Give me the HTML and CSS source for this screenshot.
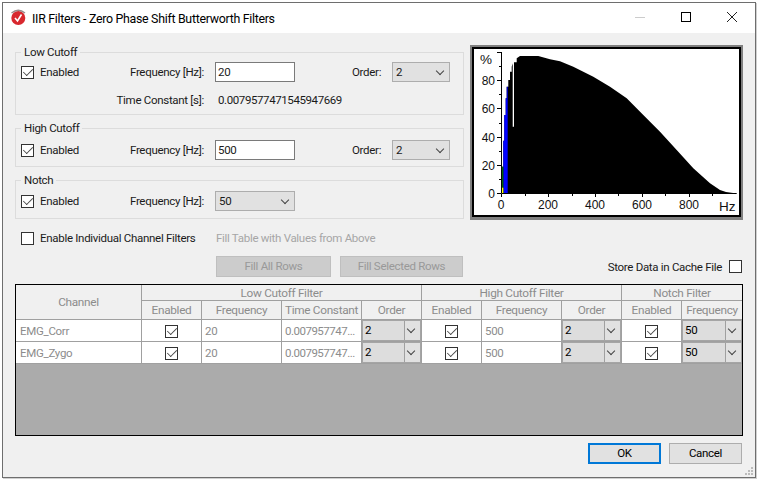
FILE: index.html
```html
<!DOCTYPE html>
<html lang="en">
<head>
    <meta charset="UTF-8">
    <title>IIR Filters</title>
    <link rel="stylesheet" href="styles.css">
</head>
<body>
<div class="window">
    <div class="titlebar">
        <svg class="app-icon" width="18" height="18" viewBox="0 0 18 18">
            <circle cx="8.300" cy="9" r="7" fill="#d8282e"/>
            <path d="M1.500 4Q8.300 -1.500 15 4" fill="none" stroke="#9a8a8a" stroke-width="1.400"/>
            <path d="M5 9l2.500 3 4-6.500" fill="none" stroke="#fff" stroke-width="1.600"/>
        </svg>
        <span class="title">IIR Filters - Zero Phase Shift Butterworth Filters</span>
        <div class="win-btns">
            <svg width="16" height="16" viewBox="0 0 16 16"><path d="M3 8.500h10" stroke="#ccc"/></svg>
            <svg width="16" height="16" viewBox="0 0 16 16"><rect x="3.500" y="3.500" width="9" height="9" fill="none" stroke="#000"/></svg>
            <svg width="16" height="16" viewBox="0 0 16 16"><path d="M3 3l10 10M13 3L3 13" stroke="#222"/></svg>
        </div>
    </div>

    <div class="content">
        <div class="top">
            <div class="groups">
                <fieldset class="group group-low">
                    <legend>Low Cutoff</legend>
                    <div class="row">
                        <label class="check"><span class="box on"></span>Enabled</label>
                        <span class="lbl">Frequency [Hz]:</span>
                        <span class="input">20</span>
                        <span class="lbl-order">Order:</span>
                        <span class="combo small">2</span>
                    </div>
                    <div class="row-tc">
                        <span class="lbl">Time Constant [s]:</span>
                        <span class="num">0.0079577471545947669</span>
                    </div>
                </fieldset>
                <fieldset class="group group-high">
                    <legend>High Cutoff</legend>
                    <div class="row">
                        <label class="check"><span class="box on"></span>Enabled</label>
                        <span class="lbl">Frequency [Hz]:</span>
                        <span class="input">500</span>
                        <span class="lbl-order">Order:</span>
                        <span class="combo small">2</span>
                    </div>
                </fieldset>
                <fieldset class="group group-notch">
                    <legend>Notch</legend>
                    <div class="row">
                        <label class="check"><span class="box on"></span>Enabled</label>
                        <span class="lbl">Frequency [Hz]:</span>
                        <span class="combo wide">50</span>
                    </div>
                </fieldset>
            </div>

            <div class="chart">
                <svg width="265" height="166" viewBox="0 0 265 166">
                    <path fill="#000" d="M27.700 144.500V117.700H29.300V91.700H30.300V66H31.700V49.300H32.700V37.700H34.300V31H36V22.700H37.700V17.700L38.700 14.300V77.700H40V13.300H42.700V9.300L46 7H64.300L76 10.300 86 12.300 99.300 17.700 119.300 27.700 136 37.700 152.700 49.300 169.300 66 186 82.700 202.700 101 219.300 119.300 236 134.300 246 141 252 143 262.700 144.500Z"/>
                    <path fill="#00f" d="M29.300 144.500V91.700H30.300V66H31.700V49.300H32.700V37.700H33.700V144.500Z"/>
                    <rect x="28" y="117.700" width="1.300" height="26.800" fill="#060"/>
                    <rect x="28" y="138.700" width="1.300" height="5.800" fill="#ff0"/>
                    <path d="M27.500 3V144.500H262.700" fill="none" stroke="#000"/>
                    <path stroke="#000" d="M23 3.500h4M25 17.500h2M23 31.500h4M25 45.500h2M23 59.500h4M25 74.500h2M23 88.500h4M25 102.500h2M23 116.500h4M25 130.500h2M23 144.500h4M27.500 145v3M51.500 145v2M74.500 145v3M98.500 145v2M121.500 145v3M144.500 145v2M168.500 145v3M191.500 145v2M215.500 145v3M238.500 145v2"/>
                    <g class="axis" text-anchor="end">
                        <text x="21" y="36">80</text>
                        <text x="21" y="64">60</text>
                        <text x="21" y="93">40</text>
                        <text x="21" y="121">20</text>
                        <text x="21" y="149">0</text>
                    </g>
                    <g class="axis" text-anchor="middle">
                        <text x="27" y="160">0</text>
                        <text x="74" y="160">200</text>
                        <text x="121" y="160">400</text>
                        <text x="168" y="160">600</text>
                        <text x="215" y="160">800</text>
                    </g>
                    <text class="unit" x="6" y="15">%</text>
                    <text class="unit" x="245" y="162">Hz</text>
                </svg>
            </div>
        </div>

        <div class="controls">
            <label class="check"><span class="box"></span>Enable Individual Channel Filters</label>
            <span class="hint">Fill Table with Values from Above</span>
        </div>
        <div class="actions">
            <span class="btn off first">Fill All Rows</span>
            <span class="btn off">Fill Selected Rows</span>
            <label class="store">Store Data in Cache File<span class="box"></span></label>
        </div>

        <div class="grid-wrap">
            <table class="grid">
                <colgroup>
                    <col class="c-ch"><col class="c-en"><col class="c-fr"><col class="c-fr"><col class="c-en">
                    <col class="c-en"><col class="c-fr"><col class="c-en"><col class="c-en"><col class="c-en">
                </colgroup>
                <thead>
                    <tr class="h1">
                        <th rowspan="2">Channel</th>
                        <th colspan="4">Low Cutoff Filter</th>
                        <th colspan="3">High Cutoff Filter</th>
                        <th colspan="2">Notch Filter</th>
                    </tr>
                    <tr class="h2">
                        <th>Enabled</th><th>Frequency</th><th>Time Constant</th><th>Order</th>
                        <th>Enabled</th><th>Frequency</th><th>Order</th>
                        <th>Enabled</th><th>Frequency</th>
                    </tr>
                </thead>
                <tbody>
                    <tr>
                        <td class="name">EMG_Corr</td>
                        <td class="mid"><span class="box on"></span></td>
                        <td>20</td><td class="tc">0.007957747...</td>
                        <td class="sel"><span class="cell-combo">2</span></td>
                        <td class="mid"><span class="box on"></span></td>
                        <td>500</td>
                        <td class="sel"><span class="cell-combo">2</span></td>
                        <td class="mid"><span class="box on"></span></td>
                        <td class="sel"><span class="cell-combo">50</span></td>
                    </tr>
                    <tr>
                        <td class="name">EMG_Zygo</td>
                        <td class="mid"><span class="box on"></span></td>
                        <td>20</td><td class="tc">0.007957747...</td>
                        <td class="sel"><span class="cell-combo">2</span></td>
                        <td class="mid"><span class="box on"></span></td>
                        <td>500</td>
                        <td class="sel"><span class="cell-combo">2</span></td>
                        <td class="mid"><span class="box on"></span></td>
                        <td class="sel"><span class="cell-combo">50</span></td>
                    </tr>
                </tbody>
            </table>
        </div>

        <div class="footer">
            <span class="btn ok">OK</span>
            <span class="btn">Cancel</span>
        </div>
    </div>

    <svg class="grip" width="8" height="8" viewBox="0 0 8 8">
        <path fill="#bbb" d="M6 0h2v2H6zM3 3h2v2H3zM6 3h2v2H6zM0 6h2v2H0zM3 6h2v2H3zM6 6h2v2H6z"/>
    </svg>
</div>
</body>
</html>
```

FILE: styles.css
```css
* {
    box-sizing: border-box;
}
body {
    margin: 0;
    padding: 2px 4px 2px 2px;
    background-color: #fff;
    font-family: Roboto, "Liberation Sans", Arial, sans-serif;
    font-size: 11.5px;
    letter-spacing: -0.3px;
    color: #1a1a1a;
}
.window {
    height: 476px;
    border: 1px solid #6e6e6e;
    box-shadow: 1px 1px 0 #d0d0d0;
    background-color: #f0f0f0;
    display: flex;
    flex-direction: column;
    position: relative;
}
.titlebar {
    height: 30px;
    flex: none;
    background-color: #fff;
    display: flex;
    align-items: center;
    padding-left: 7px;
    color: #000;
    font-size: 12.400px;
}
.app-icon {
    margin-right: 4px;
}
.win-btns {
    margin-left: auto;
    display: flex;
    gap: 30px;
    padding-right: 15px;
    padding-bottom: 2px;
}
.content {
    flex: 1;
    padding: 12px 12px 0 12px;
}
.top {
    display: flex;
    justify-content: space-between;
}
.groups {
    width: 449px;
}
.group {
    margin: 0 0 6px;
    padding: 0 0 0 5px;
    height: 46px;
    border: 1px solid #dcdcdc;
    min-width: 0;
}
.group-low {
    height: 70px;
}
.group-low .row {
    margin-top: 2px;
}
.group-high .row {
    margin-top: 4px;
}
.group-notch {
    margin-bottom: 0;
}
.group-notch .row {
    margin-top: 3px;
}
legend {
    padding: 0 3px;
    margin-left: 0;
    height: 14px;
    line-height: 14px;
}
.row {
    display: flex;
    align-items: center;
    height: 22px;
}
.row-tc {
    display: flex;
    align-items: center;
    height: 18px;
    margin-top: 8px;
}
.check {
    display: flex;
    align-items: center;
    gap: 6px;
    width: 100px;
    white-space: nowrap;
}
.box {
    display: inline-block;
    flex: none;
    width: 13px;
    height: 13px;
    border: 1px solid #333;
    background-color: #fff;
    position: relative;
}
.box.on::after {
    content: "";
    position: absolute;
    left: 1px;
    top: 1px;
    width: 9px;
    height: 5px;
    border-left: 1px solid #444;
    border-bottom: 1px solid #444;
    transform: rotate(-45deg) scale(0.9);
}
.lbl {
    width: 83px;
    text-align: right;
    white-space: nowrap;
}
.row-tc .lbl {
    width: 183px;
    margin-right: 14px;
}
.num {
    letter-spacing: -0.4px;
}
.input {
    margin-left: 11px;
    width: 80px;
    height: 20px;
    line-height: 16px;
    padding: 1px 2px;
    background-color: #fff;
    border: 1px solid #7a7a7a;
}
.lbl-order {
    margin-left: 57px;
    width: 40px;
}
.combo {
    display: block;
    height: 20px;
    line-height: 18px;
    padding-left: 3px;
    border: 1px solid #adadad;
    background-color: #e1e1e1;
    position: relative;
}
.combo::after,
.cell-combo::after {
    content: "";
    position: absolute;
    width: 5px;
    height: 5px;
    border-right: 1px solid #444;
    border-bottom: 1px solid #444;
    transform: rotate(45deg);
    right: 6px;
    top: 5px;
}
.small {
    width: 58px;
}
.wide {
    width: 80px;
    margin-left: 11px;
}
.chart {
    width: 273px;
    height: 175px;
    border: 2px solid #808080;
    border-bottom-width: 3px;
    background-color: #fff;
}
.chart svg {
    display: block;
    box-sizing: content-box;
    border: 2px solid #000;
}
.axis text {
    font-family: "Liberation Sans", Arial, sans-serif;
    font-size: 12px;
    letter-spacing: 0;
    fill: #111;
}
.unit {
    font-family: "Liberation Sans", Arial, sans-serif;
    font-size: 13.500px;
    letter-spacing: 0;
    fill: #111;
}
.controls {
    display: flex;
    align-items: center;
    height: 16px;
    margin-top: 10px;
    padding-left: 6px;
}
.controls .check {
    width: 195px;
}
.hint {
    color: #a6a6a6;
}
.actions {
    display: flex;
    align-items: center;
    margin-top: 10px;
    padding-left: 201px;
}
.btn {
    display: block;
    width: 123px;
    height: 21px;
    line-height: 19px;
    text-align: center;
    border: 1px solid #adadad;
    background-color: #e1e1e1;
}
.btn.off {
    background-color: #ccc;
    border-color: #bfbfbf;
    color: #999;
}
.btn.first {
    width: 115px;
    margin-right: 9px;
}
.store {
    margin-left: auto;
    margin-right: 1px;
    display: flex;
    align-items: center;
    gap: 7px;
}
.grid-wrap {
    height: 152px;
    margin-top: 7px;
    border: 1px solid #000;
    background-color: #ababab;
}
.grid {
    table-layout: fixed;
    width: 726px;
    border-collapse: separate;
    border-spacing: 0;
}
.c-ch { width: 126px; }
.c-en { width: 60px; }
.c-fr { width: 80px; }
.grid th {
    font-weight: normal;
    font-size: 11.800px;
    color: #8c8c8c;
    background-color: #f0f0f0;
    border-right: 1px solid #a0a0a0;
    border-bottom: 1px solid #a0a0a0;
    padding: 0;
    white-space: nowrap;
}
.h1 th {
    height: 16px;
    line-height: 14px;
}
.h2 th {
    height: 19px;
}
.grid td {
    height: 22px;
    padding: 0 3px;
    background-color: #fff;
    border-right: 1px solid #a0a0a0;
    border-bottom: 1px solid #a0a0a0;
    color: #8c8c8c;
    white-space: nowrap;
    overflow: hidden;
}
.grid th:last-child,
.grid td:last-child {
    border-right: 0;
}
.grid .name {
    padding-left: 4px;
}
.grid .tc {
    letter-spacing: -0.5px;
}
.grid .mid {
    text-align: center;
}
.grid .mid .box {
    vertical-align: middle;
}
.grid .sel {
    padding: 0;
}
.cell-combo {
    display: block;
    height: 21px;
    line-height: 19px;
    padding-left: 2px;
    border: 1px solid #a5a5a5;
    color: #000;
    background: linear-gradient(to left, #e1e1e1 15px, #a0a0a0 15px, #a0a0a0 16px, #ddd 16px);
    position: relative;
}
.footer {
    display: flex;
    justify-content: flex-end;
    gap: 8px;
    margin-top: 7px;
    padding-right: 1px;
}
.footer .btn {
    width: 73px;
    color: #000;
}
.btn.ok {
    border: 2px solid #0078d7;
    line-height: 17px;
}
.grip {
    position: absolute;
    right: 2px;
    bottom: 2px;
}
```
